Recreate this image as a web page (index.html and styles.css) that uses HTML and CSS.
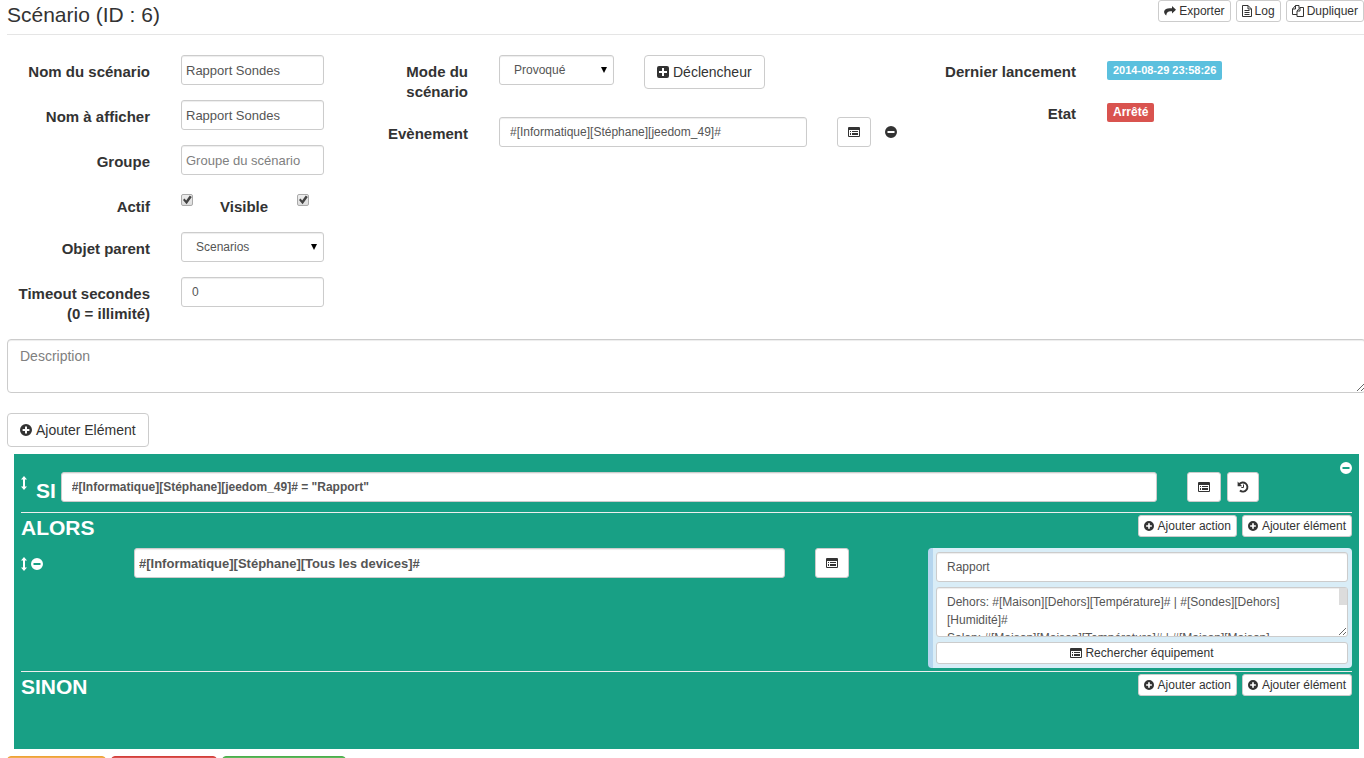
FILE: index.html
```html
<!DOCTYPE html>
<html lang="fr">
<head>
<meta charset="utf-8">
<title>Scénario</title>
<link rel="stylesheet" href="styles.css">
</head>
<body>
<svg class="sprite" aria-hidden="true">
  <symbol id="i-plus" viewBox="0 0 12 12"><path fill-rule="evenodd" d="M6 0a6 6 0 1 0 0 12A6 6 0 0 0 6 0zM5 2.600h2V5h2.400v2H7v2.400H5V7H2.600V5H5z"/></symbol>
  <symbol id="i-minus" viewBox="0 0 12 12"><path fill-rule="evenodd" d="M6 0a6 6 0 1 0 0 12A6 6 0 0 0 6 0zM2.500 5h7v2h-7z"/></symbol>
  <symbol id="i-plus-square" viewBox="0 0 12 12"><path fill-rule="evenodd" d="M2 0h8a2 2 0 0 1 2 2v8a2 2 0 0 1-2 2H2a2 2 0 0 1-2-2V2a2 2 0 0 1 2-2zM5 2v3H2v2h3v3h2V7h3V5H7V2z"/></symbol>
  <symbol id="i-list" viewBox="0 0 12 12"><path d="M1 1h10a1 1 0 0 1 1 1v2H0V2a1 1 0 0 1 1-1zM0 4h1v6H0zM11 4h1v6h-1zM0 10h12a1 1 0 0 1-1 1H1a1 1 0 0 1-1-1zM2 5h1v1H2zM4 5h6v1H4zM2 7h1v2H2zM4 7h6v2H4z"/></symbol>
  <symbol id="i-history" viewBox="0 0 12 12"><path fill="none" stroke="currentColor" stroke-width="1.900" d="M2.200 3.200A4.600 4.600 0 1 1 2.900 9.600"/><path d="M.6.6v4.600H5.200z"/><path fill="none" stroke="currentColor" d="M6.500 3.500v3H4.300"/></symbol>
  <symbol id="i-share" viewBox="0 0 12 12"><path d="M8 1l4 3.700-4 3.700V6.200C4.500 6 2.600 6.700 2.300 10.500.2 9.300-.6 6.500.8 4.900 2.200 3.300 4.500 3.200 8 3.200z"/></symbol>
  <symbol id="i-file" viewBox="0 0 10 12"><path fill="none" stroke="currentColor" d="M.5.5h5.500l3.500 3.500v7.500h-9zM6 .5V4h3.500M2.500 5.500h5M2.500 7.500h5M2.500 9.500h5"/></symbol>
  <symbol id="i-copy" viewBox="0 0 12 12"><path fill="none" stroke="currentColor" d="M5 9.500H.5V4L3.500.5H7V3M3.500.5V4H.5M8 2.500h3.500v9H5V6zM8 2.500V6H5"/></symbol>
  <symbol id="i-sort" viewBox="0 0 6 14"><path d="M3 0l3 3.500H4v7h2L3 14 0 10.500h2v-7H0z"/></symbol>
</svg>

<main class="page">
  <header class="header">
    <h1 class="title">Scénario (ID : 6)</h1>
    <div class="toolbar">
      <button class="btn btn-xs"><svg class="icon"><use href="#i-share"/></svg>Exporter</button>
      <button class="btn btn-xs"><svg class="icon icon-file"><use href="#i-file"/></svg>Log</button>
      <button class="btn btn-xs"><svg class="icon"><use href="#i-copy"/></svg>Dupliquer</button>
    </div>
  </header>

  <form class="settings">
    <div class="col col-identity">
      <div class="group"><label class="label" for="name">Nom du scénario</label><input class="field compact" id="name" value="Rapport Sondes"></div>
      <div class="group"><label class="label" for="display">Nom à afficher</label><input class="field compact" id="display" value="Rapport Sondes"></div>
      <div class="group"><label class="label" for="group">Groupe</label><input class="field compact" id="group" placeholder="Groupe du scénario"></div>
      <div class="group">
        <label class="label" for="active">Actif</label>
        <div class="checks"><input class="check" type="checkbox" id="active" checked><label class="check-label" for="visible">Visible</label><input class="check" type="checkbox" id="visible" checked></div>
      </div>
      <div class="group"><label class="label" for="parent">Objet parent</label><div class="select"><select class="field" id="parent"><option>Scenarios</option></select></div></div>
      <div class="group"><label class="label" for="timeout">Timeout secondes<br>(0 = illimité)</label><input class="field" id="timeout" value="0"></div>
    </div>
    <div class="col col-trigger">
      <div class="group">
        <label class="label" for="mode">Mode du scénario</label>
        <div class="mode"><div class="select"><select class="field" id="mode"><option>Provoqué</option></select></div><button type="button" class="btn"><svg class="icon"><use href="#i-plus-square"/></svg>Déclencheur</button></div>
      </div>
      <div class="group">
        <label class="label" for="event">Evènement</label>
        <div class="event"><input class="field" id="event" value="#[Informatique][Stéphane][jeedom_49]#"><button type="button" class="btn btn-sm"><svg class="icon"><use href="#i-list"/></svg></button><button type="button" class="bare"><svg class="icon"><use href="#i-minus"/></svg></button></div>
      </div>
    </div>
    <div class="col col-status">
      <div class="group"><span class="label">Dernier lancement</span><div class="status"><span class="badge badge-info">2014-08-29 23:58:26</span></div></div>
      <div class="group"><span class="label">Etat</span><div class="status"><span class="badge badge-danger">Arrêté</span></div></div>
    </div>
  </form>

  <textarea class="field description" placeholder="Description"></textarea>
  <button class="btn add-element"><svg class="icon"><use href="#i-plus"/></svg>Ajouter Elément</button>

  <section class="element">
    <div class="condition">
      <svg class="icon icon-sort"><use href="#i-sort"/></svg>
      <label class="keyword" for="condition">SI</label>
      <input class="field strong" id="condition" value="#[Informatique][Stéphane][jeedom_49]# = &quot;Rapport&quot;">
      <div class="condition-buttons">
        <button class="btn btn-sm"><svg class="icon"><use href="#i-list"/></svg></button>
        <button class="btn btn-sm"><svg class="icon"><use href="#i-history"/></svg></button>
      </div>
      <button class="bare remove"><svg class="icon"><use href="#i-minus"/></svg></button>
    </div>
    <div class="branch">
      <h2 class="keyword">ALORS</h2>
      <div class="branch-buttons">
        <button class="btn btn-xs"><svg class="icon icon-small"><use href="#i-plus"/></svg>Ajouter action</button>
        <button class="btn btn-xs"><svg class="icon icon-small"><use href="#i-plus"/></svg>Ajouter élément</button>
      </div>
    </div>
    <div class="action">
      <div class="action-tools"><svg class="icon icon-sort"><use href="#i-sort"/></svg><button class="bare"><svg class="icon"><use href="#i-minus"/></svg></button></div>
      <input class="field compact strong" value="#[Informatique][Stéphane][Tous les devices]#">
      <button class="btn btn-sm"><svg class="icon"><use href="#i-list"/></svg></button>
      <div class="options">
        <input class="field" value="Rapport">
        <div class="message-box"><textarea class="field message">Dehors: #[Maison][Dehors][Température]# | #[Sondes][Dehors][Humidité]#
Salon: #[Maison][Maison][Température]# | #[Maison][Maison]</textarea></div>
        <button class="btn btn-xs"><svg class="icon"><use href="#i-list"/></svg>Rechercher équipement</button>
      </div>
    </div>
    <div class="branch branch-else">
      <h2 class="keyword">SINON</h2>
      <div class="branch-buttons">
        <button class="btn btn-xs"><svg class="icon icon-small"><use href="#i-plus"/></svg>Ajouter action</button>
        <button class="btn btn-xs"><svg class="icon icon-small"><use href="#i-plus"/></svg>Ajouter élément</button>
      </div>
    </div>
  </section>

  <footer class="footer">
    <button class="btn btn-warning"></button>
    <button class="btn btn-danger"></button>
    <button class="btn btn-success"></button>
  </footer>
</main>
</body>
</html>
```
FILE: styles.css
```css
* { box-sizing: border-box; }

html { height: 100%; overflow: hidden; }

body {
  margin: 0;
  height: 100%;
  overflow: hidden;
  background: #fff;
  color: #333;
  font: 14px/20px "Liberation Sans", Arial, sans-serif;
}

.sprite { display: none; }
.page { margin: 0 -2px 0 7px; }

.icon { width: 12px; height: 12px; flex: none; fill: currentColor; }
.icon-file { width: 10px; }
.icon-small { width: 10px; height: 10px; }
.icon-sort { width: 6px; height: 14px; }

.btn {
  display: inline-flex;
  align-items: center;
  justify-content: center;
  gap: 4px;
  height: 34px;
  margin: 0;
  padding: 0 12px;
  border: 1px solid #ccc;
  border-radius: 4px;
  background: #fff;
  color: #333;
  font: inherit;
  white-space: nowrap;
}
.btn-sm { height: 30px; padding: 0 10px; border-radius: 3px; }
.btn-xs { height: 22px; padding: 0 5px; border-radius: 3px; font-size: 12px; gap: 3px; }
.bare { display: flex; padding: 0; border: 0; background: none; color: inherit; }

.field {
  display: block;
  width: 100%;
  min-width: 0;
  height: 30px;
  margin: 0;
  padding: 5px 10px;
  border: 1px solid #ccc;
  border-radius: 3px;
  background: #fff;
  box-shadow: inset 0 1px 1px rgba(0, 0, 0, .075);
  color: #555;
  font: 12px/18px "Liberation Sans", Arial, sans-serif;
}
.field::placeholder { color: #808080; }
.compact { padding: 5px 4px; font-size: 13px; }
.strong { font-weight: bold; }

.select { position: relative; }
.select .field { appearance: none; padding-left: 14px; }
.select::after {
  content: "";
  position: absolute;
  top: 12px;
  right: 7px;
  border: solid transparent;
  border-width: 6px 3px 0;
  border-top-color: #000;
  pointer-events: none;
}

.header {
  display: flex;
  justify-content: space-between;
  align-items: flex-start;
  height: 35px;
  border-bottom: 1px solid #e5e5e5;
}
.title { margin: 4px 0 0; font-size: 21px; line-height: 22px; font-weight: normal; }
.toolbar { display: flex; gap: 5px; margin-right: 2px; }

.settings { display: grid; grid-template-columns: 332fr 575fr 452fr; margin-top: 20px; }
.group { display: grid; column-gap: 31px; align-items: start; margin-bottom: 15px; }
.label { padding-top: 7px; font-size: 15px; font-weight: bold; text-align: right; }
.col-identity .group { grid-template-columns: 1fr 1fr; padding-right: 15px; }
.col-trigger .group { grid-template-columns: 98fr 415fr; padding: 0 0 0 31px; }
.col-status .group { grid-template-columns: 162fr 259fr; }

.checks { display: grid; grid-template-columns: 39px 77px 12px; align-items: start; }
.check-label { padding-top: 7px; font-size: 15px; font-weight: bold; }
.check {
  appearance: none;
  width: 12px;
  height: 12px;
  margin: 4px 0 0;
  border: 1px solid #aaa;
  border-radius: 2px;
  background: linear-gradient(#eee, #ddd);
}
.check:checked::after {
  content: "";
  display: block;
  height: 10px;
  background: #444;
  clip-path: polygon(10% 50%, 25% 36%, 42% 54%, 78% 6%, 98% 20%, 46% 92%);
}

.mode { display: grid; grid-template-columns: 115px auto; column-gap: 30px; justify-content: start; height: 34px; }
.event { display: grid; grid-template-columns: 1fr 34px 12px; column-gap: 30px; align-items: center; padding-right: 17px; }
.event .bare { margin-left: -16px; }
.event .btn { margin-right: 0; }
.event { padding-right: 1px; }

.status { display: flex; padding-top: 6px; }
.badge {
  padding: 0 6px;
  border-radius: 2px;
  color: #fff;
  font-size: 11px;
  font-weight: bold;
  line-height: 19px;
}
.badge-info { background: #5bc0de; }
.badge-danger { background: #d9534f; font-size: 12px; }

.description { height: 54px; padding: 6px 12px; border-radius: 4px; font-size: 14px; line-height: 20px; }
.add-element { margin-top: 20px; }

.element { margin: 7px 7px 0; padding: 0 7px; background: #18a085; color: #fff; }
.keyword { margin: 0; font-size: 21px; line-height: 30px; font-weight: bold; }

.condition { display: flex; height: 59px; padding-top: 18px; border-bottom: 1px solid #eee; }
.condition .icon-sort { margin: 4px 9px 0 0; }
.condition .keyword { padding-top: 4px; margin-right: 5px; }
.condition .field { flex: 1; }
.condition-buttons { display: flex; gap: 6px; margin: 0 81px 0 30px; }
.condition-buttons .btn + .btn { padding: 0 9px; }
.remove { height: 12px; margin-top: -10px; }

.branch { display: flex; justify-content: space-between; align-items: flex-start; height: 35px; }
.branch-buttons { display: flex; gap: 5px; padding-top: 2px; }
.branch-buttons .btn { gap: 4px; }

.action {
  display: grid;
  grid-template-columns: 83px 651fr 34px 473fr;
  column-gap: 30px;
  align-items: start;
  padding-bottom: 3px;
}
.action-tools { display: flex; align-items: center; gap: 4px; height: 32px; }
.options {
  display: grid;
  gap: 5px;
  margin-left: 49px;
  padding: 4px 4px 4px 3px;
  border-left: 5px solid #b5d5ee;
  border-radius: 4px;
  background: #d9edf7;
}
.message-box { position: relative; }
.message-box::after {
  content: "";
  position: absolute;
  top: 1px;
  right: 1px;
  width: 8px;
  height: 17px;
  background: #dcdcdc;
}
.message { height: 50px; padding-right: 19px; resize: vertical; }

.branch-else { height: 78px; border-top: 1px solid #eee; }

.footer { display: flex; gap: 5px; padding-top: 7px; }
.btn-warning { width: 99px; background: #f0ad4e; border-color: #eea236; }
.btn-danger { width: 106px; background: #d9534f; border-color: #d43f3a; }
.btn-success { width: 124px; background: #5cb85c; border-color: #4cae4c; }
```
